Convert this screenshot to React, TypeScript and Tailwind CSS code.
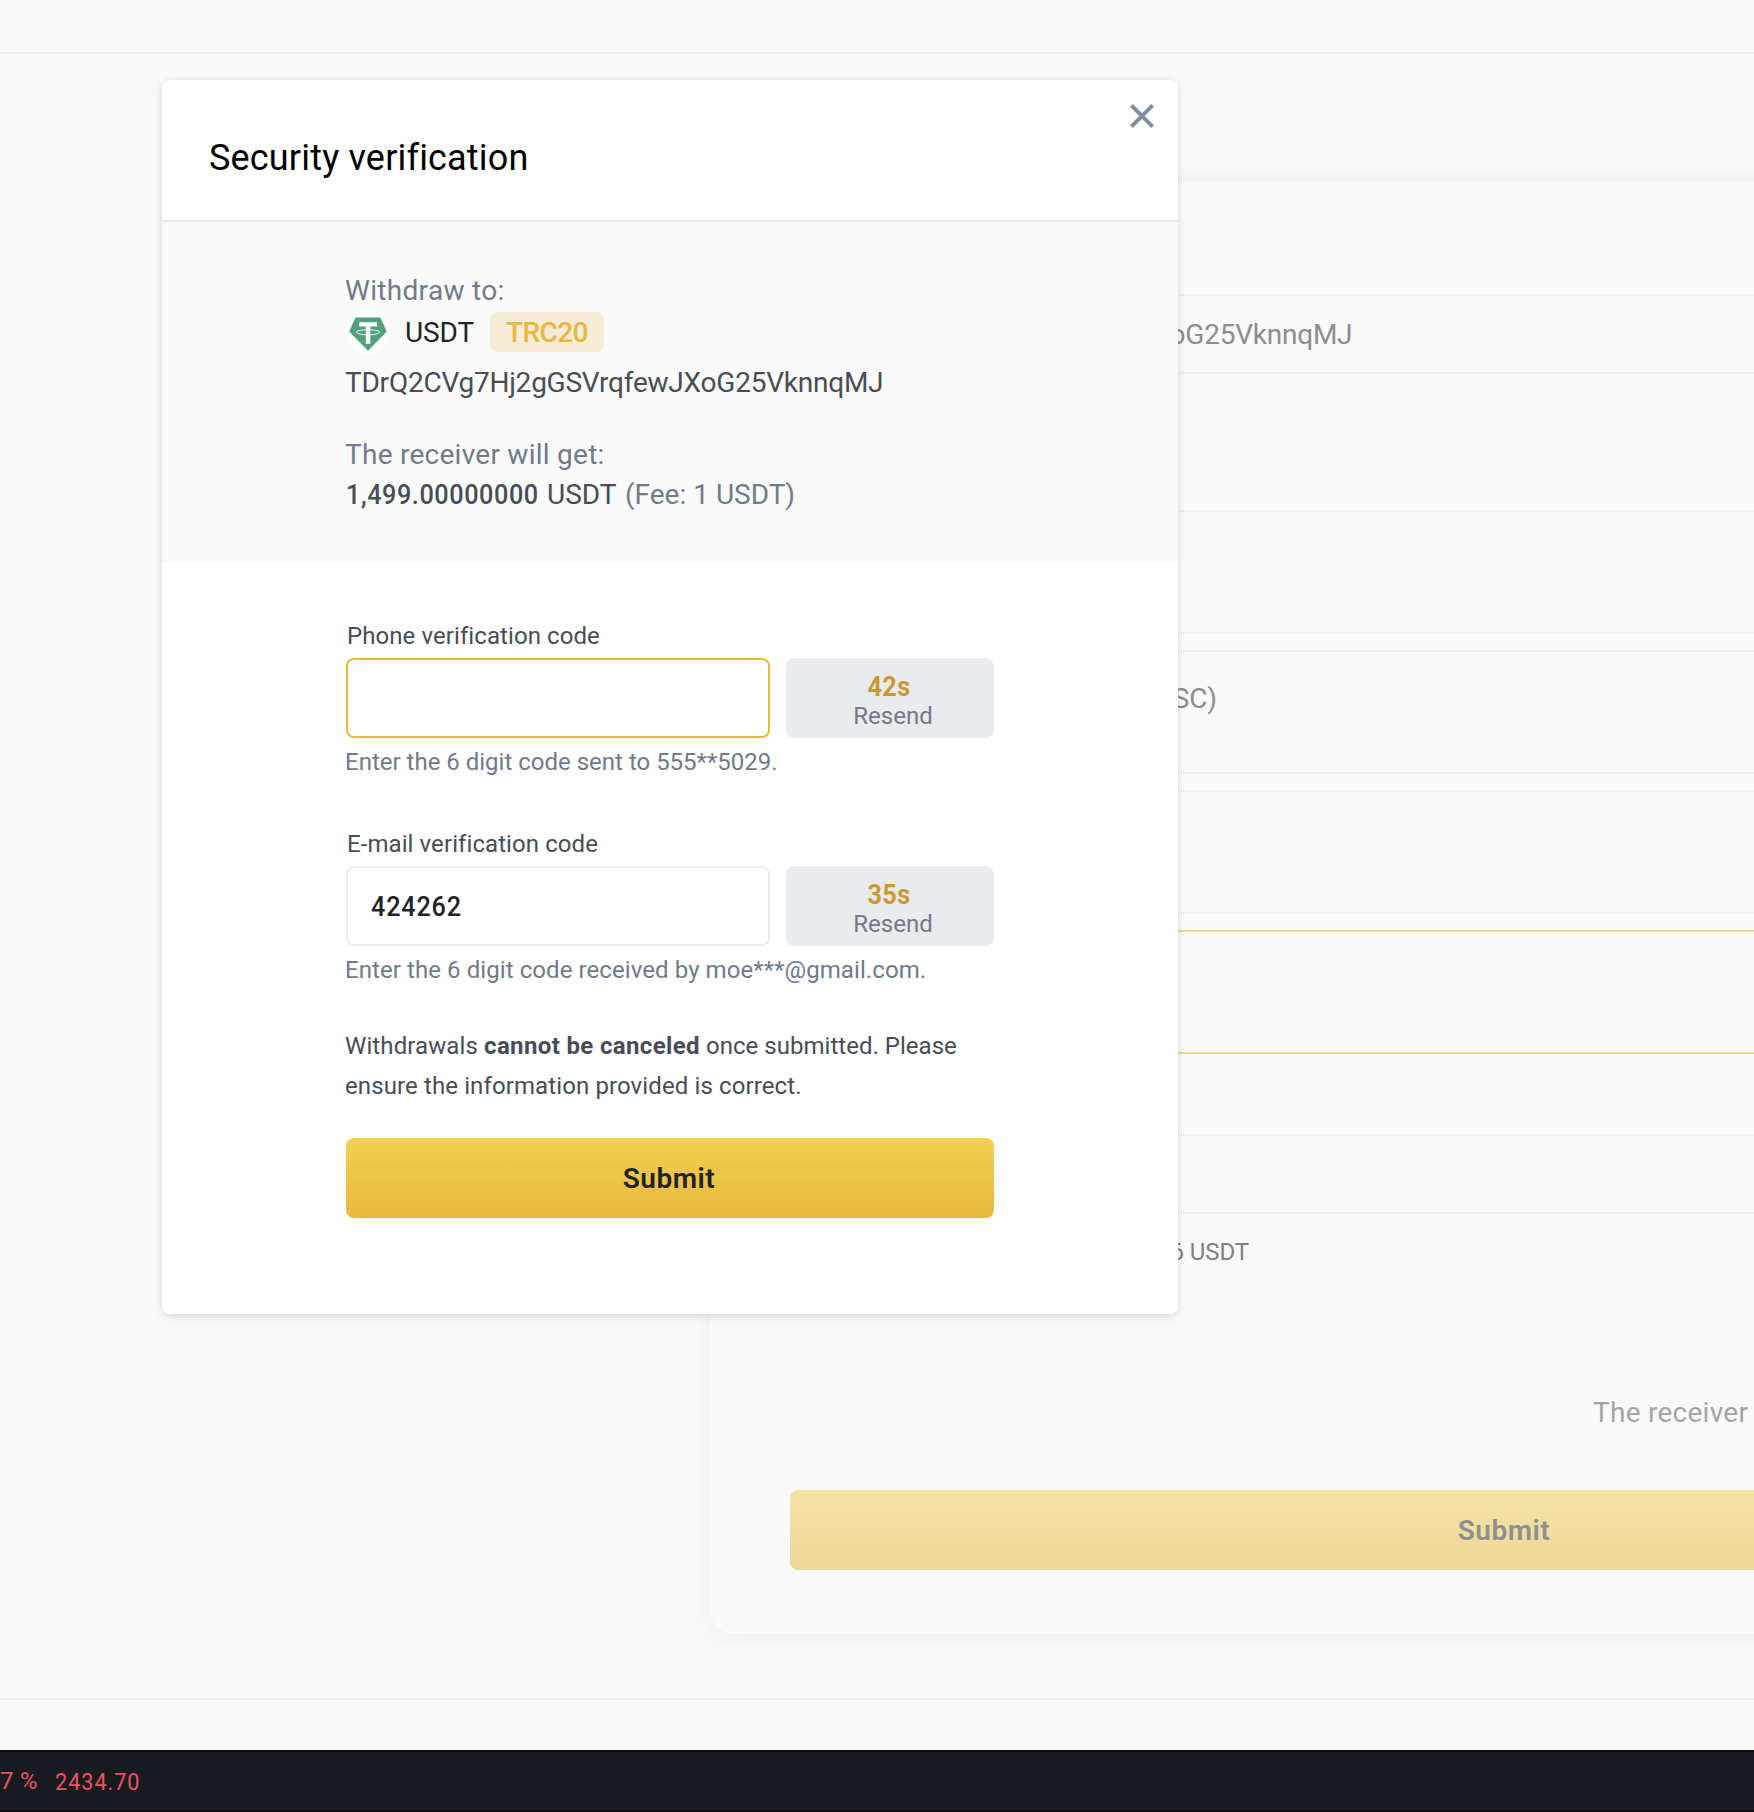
import type { ReactNode } from 'react';

const ADDRESS = 'TDrQ2CVg7Hj2gGSVrqfewJXoG25VknnqMJ';

function TetherIcon() {
  return (
    <svg viewBox="0 0 44 44" className="h-11 w-11 shrink-0">
      <circle cx="22" cy="22" r="22" fill="#fff" />
      <path d="M9.4 7.6h25L40.8 21.6 22 40.8 3.2 21.6z" fill="#50a17c" />
      <path d="M13.2 12.3h17.8v4.2h-6.7v17.2h-4.5v-17.2h-6.6z" fill="#fff" />
      <ellipse cx="22" cy="22.2" rx="11.8" ry="2.6" fill="none" stroke="#fff" strokeWidth="0.9" />
    </svg>
  );
}

function CodeField({
  label,
  value,
  seconds,
  focused,
  children,
}: {
  label: string;
  value: string;
  seconds: string;
  focused?: boolean;
  children: ReactNode;
}) {
  return (
    <div>
      <div className="pl-px text-[24px] leading-[28px] tracking-[0.08px] text-[#474d57]">{label}</div>
      <div className="mt-2 flex gap-4">
        <div
          className={
            focused
              ? 'flex h-20 w-[424px] items-center rounded-lg border-2 border-[#e8b93f] bg-white'
              : 'flex h-20 w-[424px] items-center rounded-lg border-2 border-[#eaebef] bg-white pt-[2px] pl-[23px]'
          }
        >
          <span className="origin-left scale-x-90 text-[28px] font-medium tracking-[0.9px] text-[#1e2329]">{value}</span>
        </div>
        <button className="flex h-20 w-[208px] flex-col items-center rounded-lg bg-[#eaebef] pt-[14px]">
          <span className="mr-[2px] scale-x-90 text-[28px] leading-[30px] font-bold tracking-[0.5px] text-[#c99a34]">
            {seconds}
          </span>
          <span className="pl-[6px] text-[24px] leading-[28px] text-[#707a8a]">Resend</span>
        </button>
      </div>
      <div className="mt-[6px] -ml-px text-[24px] leading-[36px] whitespace-nowrap text-[#707a8a]">{children}</div>
    </div>
  );
}

function SecurityModal() {
  return (
    <div className="absolute top-20 left-[162px] flex h-[1234px] w-[1016px] flex-col overflow-hidden rounded-lg bg-white">
      <div className="relative h-[142px] shrink-0 border-b-2 border-[#eaebef] pt-[54px] pl-[47px]">
        <h1 className="text-[36px] leading-[48px] tracking-[0.18px] text-black">Security verification</h1>
        <svg viewBox="0 0 24 24" className="absolute top-6 right-6 h-6 w-6">
          <path d="M1.4 1.4l21.2 21.2M22.6 1.4L1.4 22.6" stroke="#848e9c" strokeWidth="4" fill="none" />
        </svg>
      </div>

      <div className="h-[340px] shrink-0 bg-[#fafafa] pt-[49px] pl-[183px] text-[28px] leading-[40px] whitespace-nowrap">
        <div className="tracking-[0.32px] text-[#707a8a]">Withdraw to:</div>
        <div className="-mt-px flex h-11 items-center pl-px">
          <TetherIcon />
          <span className="ml-[15px] w-[85px] pt-[2px] tracking-[-0.1px] text-[#1e2329]">USDT</span>
          <span className="flex h-10 w-[114px] items-center justify-center rounded-lg bg-[#f7ecd6] pt-[2px] font-medium tracking-[-0.6px] text-[#e8b93f]">
            TRC20
          </span>
        </div>
        <div className="mt-[9px] tracking-[-0.23px] text-[#474d57]">{ADDRESS}</div>
        <div className="mt-8 tracking-[0.26px] text-[#707a8a]">The receiver will get:</div>
        <div className="flex pl-px text-[#474d57]">
          <span className="w-[200px] origin-left scale-x-90 font-medium tracking-[0.65px]">1,499.00000000</span>
          <span className="w-[78px] pl-px">USDT</span>
          <span className="pl-px text-[#707a8a]">(Fee: 1 USDT)</span>
        </div>
      </div>

      <div className="pt-[60px] pr-[184px] pl-[184px]">
        <CodeField label="Phone verification code" value="" seconds="42s" focused>
          <span>Enter the 6 digit code sent to 555**5029.</span>
        </CodeField>
        <div className="mt-[50px]">
          <CodeField label="E-mail verification code" value="424262" seconds="35s">
            <span className="tracking-[0.08px]">Enter the 6 digit code received by moe***@gmail.com.</span>
          </CodeField>
        </div>
        <p className="mt-[38px] -ml-px text-[24px] leading-[40px] tracking-[0.11px] whitespace-nowrap text-[#474d57]">
          Withdrawals <b className="font-bold tracking-[0.36px]">cannot be canceled</b>
          <span className="tracking-[0.03px]"> once submitted. Please</span>
          <br />
          ensure the information provided is correct.
        </p>
        <button className="mt-8 flex h-20 w-full items-center justify-center rounded-lg bg-linear-to-b from-[#f2d151] to-[#e8b93f] pt-[2px] pr-[2px] text-[28px] font-semibold tracking-[0.5px] text-[#1e2329]">
          Submit
        </button>
      </div>
    </div>
  );
}

function WithdrawPage() {
  return (
    <div className="flex h-[1812px] flex-col bg-[#fafafa]">
      <header className="h-[54px] shrink-0 border-b-2 border-[#f1f1f2]" />
      <main className="h-[1646px] shrink-0 border-b-2 border-[#f1f1f2] pt-32 pl-[710px]">
        <section className="flex h-[1452px] w-[1588px] flex-col rounded-3xl bg-[#fafafa] px-20 pt-28 whitespace-nowrap shadow-[0_2px_24px_rgba(0,0,0,0.06)]">
          <div className="flex h-20 w-full shrink-0 items-center rounded-lg border-2 border-[#f0f0f1] pt-[2px] pl-[22px] text-[28px] tracking-[-0.23px] text-[#8c8d90]">
            {ADDRESS}
          </div>
          <div className="mt-[136px] flex flex-col gap-4">
            <div className="h-[124px] rounded-lg border-2 border-[#f0f0f1]" />
            <div className="h-[124px] rounded-lg border-2 border-[#f0f0f1] pt-[27px]">
              <div className="w-[425px] text-right text-[28px] leading-[40px] text-[#8c8d90]">(BSC)</div>
            </div>
            <div className="h-[124px] rounded-lg border-2 border-[#f0f0f1]" />
            <div className="h-[124px] rounded-lg border-2 border-[#efd898]" />
          </div>
          <div className="mt-20 h-20 shrink-0 rounded-lg border-2 border-[#f0f0f1]" />
          <div className="mt-5 w-[459px] text-right text-[24px] leading-[36px] tracking-[-0.1px] text-[#7f7f7f]">
            6 USDT
          </div>
          <div className="mt-[123px] pl-[803px] text-[28px] leading-[40px] tracking-[0.26px] text-[#a3a4a8]">
            The receiver
          </div>
          <button className="mt-[57px] flex h-20 w-full shrink-0 items-center justify-center rounded-lg bg-linear-to-b from-[#f6e4a5] to-[#eed899] pt-[2px] text-[28px] font-semibold tracking-[0.5px] text-[#8d8f91]">
            Submit
          </button>
        </section>
      </main>
      <footer className="mt-[50px] flex h-[62px] items-center border-t-2 border-b-2 border-t-[#0b0e11] border-b-[#120d12] bg-[#181a20] text-[24px] whitespace-nowrap text-[#eb5461]">
        <span className="w-5">7</span>
        <span className="w-[35px]">%</span>
        <span className="origin-left scale-x-90 pt-px tracking-[1.1px]">2434.70</span>
      </footer>
    </div>
  );
}

export default function App() {
  return (
    <div className="relative h-[1812px] w-full overflow-hidden font-['Roboto',sans-serif]">
      <WithdrawPage />
      <div className="absolute top-20 left-[162px] h-[1234px] w-[1016px] rounded-lg shadow-[0_4px_8px_rgba(0,0,0,0.08),0_0_8px_rgba(0,0,0,0.08)]" />
      <SecurityModal />
    </div>
  );
}
